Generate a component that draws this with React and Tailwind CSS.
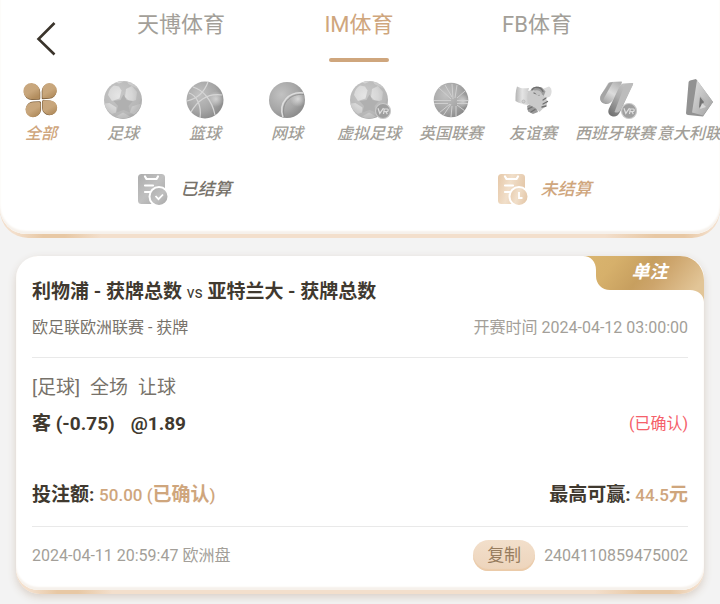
import React, { useState } from "react";

const TABS = ["天博体育", "IM体育", "FB体育"];

const CATEGORIES = [
  { name: "全部", Icon: CloverIcon },
  { name: "足球", Icon: SoccerIcon },
  { name: "篮球", Icon: BasketballIcon },
  { name: "网球", Icon: TennisIcon },
  { name: "虚拟足球", Icon: VirtualSoccerIcon },
  { name: "英国联赛", Icon: EnglandIcon },
  { name: "友谊赛", Icon: HandshakeIcon },
  { name: "西班牙联赛", Icon: SpainIcon },
  { name: "意大利联赛", Icon: ItalyIcon },
];

// shared gradients for all icons
function Gradients() {
  return (
    <svg width="0" height="0" className="absolute" aria-hidden="true">
      <defs>
        <radialGradient id="ball" cx="0.35" cy="0.35" r="0.75">
          <stop offset="0" stopColor="#c2c2c2" />
          <stop offset="0.6" stopColor="#a6a6a6" />
          <stop offset="1" stopColor="#868686" />
        </radialGradient>
        <radialGradient id="softBall" cx="0.4" cy="0.35" r="0.7">
          <stop offset="0" stopColor="#c8c8c8" />
          <stop offset="0.8" stopColor="#b6b6b6" />
          <stop offset="1" stopColor="#a2a2a2" />
        </radialGradient>
        <radialGradient id="patch" gradientUnits="userSpaceOnUse" cx="20" cy="20" r="22">
          <stop offset="0" stopColor="#e6e6e6" />
          <stop offset="0.6" stopColor="#d6d6d6" />
          <stop offset="1" stopColor="#bdbdbd" />
        </radialGradient>
        <radialGradient id="shine">
          <stop offset="0" stopColor="#e4e4e4" />
          <stop offset="1" stopColor="#e4e4e4" stopOpacity="0" />
        </radialGradient>
        <linearGradient id="clover" x1="0" y1="0" x2="0.6" y2="1">
          <stop offset="0" stopColor="#c9a880" />
          <stop offset="0.6" stopColor="#c8a67b" />
          <stop offset="1" stopColor="#b18c5d" />
        </linearGradient>
        <linearGradient id="metal" x1="0" y1="0" x2="1" y2="1">
          <stop offset="0" stopColor="#e0e0e0" />
          <stop offset="1" stopColor="#a0a0a0" />
        </linearGradient>
        <linearGradient id="sleeve" x1="0" y1="0" x2="1" y2="0">
          <stop offset="0" stopColor="#b4b4b4" />
          <stop offset="0.5" stopColor="#e4e4e4" />
          <stop offset="1" stopColor="#cccccc" />
        </linearGradient>
        <linearGradient id="spainLeft" x1="0.8" y1="0" x2="0.2" y2="1">
          <stop offset="0" stopColor="#b2b2b2" />
          <stop offset="0.5" stopColor="#dcdcdc" />
          <stop offset="1" stopColor="#9f9f9f" />
        </linearGradient>
        <linearGradient id="spainRight" x1="0.8" y1="0" x2="0.2" y2="1">
          <stop offset="0" stopColor="#c6c6c6" />
          <stop offset="0.5" stopColor="#ababab" />
          <stop offset="1" stopColor="#737373" />
        </linearGradient>
        <linearGradient id="sheetGray" x1="0" y1="0" x2="1" y2="1">
          <stop offset="0" stopColor="#adadad" />
          <stop offset="0.5" stopColor="#c0c0c0" />
          <stop offset="1" stopColor="#a5a5a5" />
        </linearGradient>
        <linearGradient id="sheetGold" x1="0" y1="0" x2="1" y2="0.3">
          <stop offset="0" stopColor="#e6c8a8" />
          <stop offset="0.5" stopColor="#f1dfca" />
          <stop offset="1" stopColor="#e5c9ab" />
        </linearGradient>
        <linearGradient id="ribbon" x1="0" y1="0.2" x2="1" y2="0.5">
          <stop offset="0" stopColor="#d9b46e" />
          <stop offset="0.22" stopColor="#d6b06b" />
          <stop offset="0.5" stopColor="#c79f5f" />
          <stop offset="0.65" stopColor="#cda56c" />
          <stop offset="1" stopColor="#e2c597" />
        </linearGradient>
      </defs>
    </svg>
  );
}

function IconFrame({ children }) {
  return (
    <svg viewBox="0 0 48 48" className="size-12" aria-hidden="true">
      {children}
    </svg>
  );
}

function VrBadge() {
  return (
    <g>
      <circle cx="38" cy="35" r="7.500" fill="#9f9f9f" stroke="#c9c9c9" strokeWidth="1.200" />
      <path
        d="M33 32.200l1.800 5.200 3.700-5.200M38.500 38l.8-5h3.200c1 0 1 2.600-.4 2.600h-2.800M41 35.800l1.300 2.400"
        fill="none"
        stroke="#dedede"
        strokeWidth="1.200"
      />
    </g>
  );
}

function CloverIcon() {
  return (
    <IconFrame>
      <g fill="#7d5f3c">
        <path d="M14.500 7.800a8.500 8.500 0 0 1 8.800 8.500v6a1.500 1.500 0 0 1-1.500 1.500l-6.500.2a8 8 0 0 1-.8-16.200z" />
        <path d="M32 7.800a7 7 0 0 1 0 15l-6 .4a1.200 1.200 0 0 1-1.300-1.300V15A7.300 7.300 0 0 1 32 7.800z" />
        <path d="M22.600 25.200a1.500 1.500 0 0 1 1.500 1.500V34a7.700 7.700 0 1 1-7.700-8.500z" />
        <path d="M26.500 24l6.500.4a7.400 7.400 0 1 1-8 7.400v-6.300a1.500 1.500 0 0 1 1.500-1.500z" />
      </g>
      <g fill="url(#clover)">
        <path d="M14.500 7a8.500 8.500 0 0 1 8.300 8.500v6a1.500 1.500 0 0 1-1.500 1.500l-6.800.2a8.100 8.100 0 0 1 0-16.200z" />
        <path d="M32.400 7a7.400 7.400 0 0 1 0 14.900l-5.700.4a1.200 1.200 0 0 1-1.300-1.300v-6.700A7.200 7.200 0 0 1 32.400 7z" />
        <path d="M22 26.100a1.500 1.500 0 0 1 1.500 1.500V34a7.500 7.500 0 1 1-7.500-7.700z" />
        <path d="M27 24.200l6 .2a7.300 7.300 0 1 1-7.400 7.300v-6a1.400 1.400 0 0 1 1.400-1.500z" />
      </g>
    </IconFrame>
  );
}

function SoccerPatches() {
  return (
    <g>
      <circle cx="24" cy="24" r="19" fill="url(#softBall)" />
      <g fill="url(#patch)">
        <path d="M9 19c1-5 3-8 6-9.500l5 1 2.500 4-2 8-7.500 2.500z" />
        <path d="M27 13l6-3 5 6-1 8-6 2-5-5z" />
        <path d="M5.500 27.500l5-.5 7 4.500-.5 5-4 1.500c-4-2.500-6.800-6-7.500-10.500z" />
        <path d="M33 30.500l9-3c-1 5-3.500 8.500-7 11l-4-2z" />
        <path d="M17 40.500l7-4 7 4c-4 2.500-10 2.500-14 0z" />
        <path d="M28 5.500c5 1 9 3.500 11.500 7.500l-4-2-6-3z" />
        <path d="M17 6.500c3-1.500 6-1.500 8-1l-5 2z" />
      </g>
      <path d="M24.500 18.500l3 5.500 6.500 1-4.500 5 1.500 6.500-6.500-2.500-7 2.500 1.500-6.500-4.500-5 7-1z" fill="#b0b0b0" />
    </g>
  );
}

function SoccerIcon() {
  return (
    <IconFrame>
      <SoccerPatches />
    </IconFrame>
  );
}

function BasketballIcon() {
  return (
    <IconFrame>
      <circle cx="24" cy="24" r="18.500" fill="url(#ball)" />
      <circle cx="35" cy="23" r="8" fill="url(#shine)" opacity=".7" />
      <g fill="none" stroke="#d6d6d6" strokeWidth="1.200">
        <path d="M6 25c9-2 17-8 21-19" />
        <path d="M12 11c10 3 19 13 22 28" />
        <path d="M8 17c7 2 13 12 11 25" />
        <path d="M10 36c7-12 17-19 31-17" />
      </g>
    </IconFrame>
  );
}

function TennisIcon() {
  return (
    <IconFrame>
      <circle cx="24" cy="24" r="18" fill="url(#ball)" />
      <circle cx="35" cy="23" r="8" fill="url(#shine)" opacity=".8" />
      <path d="M20 41c-5-14 6-26 20.500-24" fill="none" stroke="#dedede" strokeWidth="1.600" />
      <path d="M21.500 41c-4-13 5-24 19.500-22.500" fill="none" stroke="#8a8a8a" strokeWidth=".8" />
    </IconFrame>
  );
}

function VirtualSoccerIcon() {
  return (
    <IconFrame>
      <SoccerPatches />
      <VrBadge />
    </IconFrame>
  );
}

function EnglandIcon() {
  return (
    <IconFrame>
      <circle cx="24" cy="24" r="17.300" fill="url(#ball)" />
      <circle cx="36" cy="25" r="7" fill="url(#shine)" opacity=".7" />
      <g fill="none" stroke="#cfcfcf" strokeWidth="1">
        <path d="M7 24.500h17M7 27.500h14M30 24.500h11M30 27.500h11" />
        <path d="M25 8l1 15M30 9l-2 13M24 41l1-11M29 40v-10" />
        <path d="M12 12l12 11M38 15l-8 7M12 37l11-9M38 35l-8-6M18 9l7 12M16 40l8-12" />
      </g>
    </IconFrame>
  );
}

function HandshakeIcon() {
  return (
    <IconFrame>
      <path d="M31 14l9-3.500c3 2 3.500 6 1 10l-7 3z" fill="#dcdcdc" />
      <path d="M20 17l3-5 5-1.500 5 1 3.500 4-2 5-10 2z" fill="#9c9c9c" />
      <path d="M18 30l5-3 4 3 2 6-5 2-5-2.500z" fill="#9a9a9a" />
      <path d="M19 15l5-1 6 2 5 4 3.500 5-1 5-4 3-3 3-4-4-8-4-3-4z" fill="#cacaca" />
      <path d="M8 10.500c4 2 7 2 12 1.500-2 6-2 11-1 17-5-.5-9-2-12.500-4 0-5 0-10 1.500-14.500z" fill="url(#sleeve)" />
      <circle cx="14.500" cy="25.500" r="1.500" fill="#d2d2d2" stroke="#aaa" strokeWidth=".6" />
      <g fill="none" stroke="#6f6f6f" strokeWidth="1.300" strokeLinecap="round">
        <path d="M23 14c1-2 3-3 5-2.500M29 11.500c3 0 4 2 5 4M25 17l5 2" />
        <path d="M34 24l3-2M34 28l4.500-2.500M33 31l4-1M19 33l4-2M22 36l4-2.500" />
      </g>
      <path d="M25 15c3-2 7 0 8 3l-5 1.500z" fill="#c3c3c3" />
    </IconFrame>
  );
}

function SpainIcon() {
  return (
    <IconFrame>
      <path d="M20 6l10-.5c1 0 1.200.7.800 1.500L22 24c-2 3-5 5-9 3.500C9 26 8.500 22 10 19l6-10c1-2 2-3 4-3z" fill="url(#spainLeft)" />
      <path d="M18 7l4-1-9 16c-1 2-1 4 0 5.500-4-1.500-4.500-5.500-3-8.500z" fill="#a4a4a4" />
      <path d="M32 7.500l9-.5c1 0 1.500.5 1 1.500L29 36c-2 4-5 5.500-8.500 4-3-1.500-4-4-2.500-7.500l9-19c1.500-3.500 2.500-5.500 5-6z" fill="url(#spainRight)" />
      <path d="M34 8l7-1c1 0 1.500.5 1 1.500L29.500 34c-2 3-4 3-6 2z" fill="#bcbcbc" />
      <VrBadge />
    </IconFrame>
  );
}

function ItalyIcon() {
  return (
    <IconFrame>
      <path d="M17 4.500l6-1.500L40 26 30 40.500 15 39c-1 0-2-1-2-2L15.500 7c0-1.500.5-2 1.500-2.500z" fill="#929292" />
      <path d="M24 4l16 22-10 13.500-11-3z" fill="url(#metal)" />
      <path d="M27 20l9 7-6 8-4-2z" fill="#b6b6b6" />
      <path d="M27 21l4 5-2 3-3 3z" fill="#737373" />
      <path d="M27 33l2-6 4 4z" fill="#d9d9d9" />
    </IconFrame>
  );
}

function SheetIcon({ gold }) {
  const fill = gold ? "url(#sheetGold)" : "url(#sheetGray)";
  return (
    <svg viewBox="0 0 32 32" className="size-8" aria-hidden="true">
      <rect x="1" y="1" width="27" height="30" rx="3.500" fill={fill} />
      <path
        d="M8 3.500l1.500 2.500h10L21 3.500M8 12.500h8M8 19h5"
        fill="none"
        stroke="#fff"
        strokeWidth="2.200"
        strokeLinecap="round"
        strokeLinejoin="round"
      />
      <circle cx="22" cy="23.500" r="9.500" fill={fill} stroke="#fff" strokeWidth="2" />
      {gold ? (
        <path d="M22 19v6h3.500" fill="none" stroke="#fff" strokeWidth="1.800" />
      ) : (
        <path d="M18.500 23l3 3.200 4.500-4.700" fill="none" stroke="#fff" strokeWidth="1.800" />
      )}
    </svg>
  );
}

// thin gold strip that shows below a rounded white panel
const GOLD_EDGE =
  "bg-[linear-gradient(90deg,#f3dfcc_2%,#e8c8a4_6%,#e8c8a4_9%,#f3dfcc_14%,#f3dfcc_84%,#e8c8a4_91%,#e8c8a4_95%,#f3dfcc_99%)]";

function Header() {
  const [tab, setTab] = useState("IM体育");
  const [category, setCategory] = useState("全部");
  const [settled, setSettled] = useState(false);

  return (
    <header className={`rounded-b-[28px] pb-1 ${GOLD_EDGE}`}>
      <div className="overflow-hidden rounded-b-[26px] bg-white pb-7 shadow-[inset_0_-3px_2px_#f6f1eb]">
        <nav className="flex h-[62px] pr-[94px]">
          <button className="flex w-[92px] shrink-0 items-center pt-4 pl-9" aria-label="返回">
            <svg viewBox="0 0 20 34" className="h-[34px] w-5" fill="none" aria-hidden="true">
              <path d="M18.500 1L2.500 17l16 15.500" stroke="#3a342b" strokeWidth="2.600" />
            </svg>
          </button>
          {TABS.map((name) => (
            <button
              key={name}
              onClick={() => setTab(name)}
              className={`flex flex-1 flex-col items-center justify-between pt-[9px] text-[22px] leading-8 ${
                tab === name ? "text-[#cfa67d]" : "text-[#a39f99]"
              }`}
            >
              {name}
              {tab === name && <span className="h-1 w-[60px] rounded-full bg-[#cfa67d]" />}
            </button>
          ))}
        </nav>

        <div className="mt-[14px] flex overflow-x-auto [scrollbar-width:none]">
          {CATEGORIES.map(({ name, Icon }) => (
            <button
              key={name}
              onClick={() => setCategory(name)}
              className={`flex w-[82px] shrink-0 flex-col items-center text-base leading-5 font-medium whitespace-nowrap italic ${
                category === name ? "text-[#cfa67d]" : "text-[#a39f99]"
              }`}
            >
              <Icon />
              {name}
            </button>
          ))}
        </div>

        <div className="mt-7 flex">
          <button
            onClick={() => setSettled(true)}
            className="flex flex-1 items-center justify-center gap-3 pl-2 text-[17px] leading-[34px] font-medium text-[#77726a] italic"
          >
            <SheetIcon />
            已结算
          </button>
          <button
            onClick={() => setSettled(false)}
            className="flex flex-1 items-center justify-center gap-3 pl-2 text-[17px] leading-[34px] font-medium text-[#cfa67d] italic"
          >
            <SheetIcon gold />
            未结算
          </button>
        </div>
      </div>
    </header>
  );
}

function BetCard() {
  return (
    <article className={`relative mx-4 mt-[18px] rounded-[24px] pb-1 shadow-[0_3px_8px_#d9cfc6] ${GOLD_EDGE}`}>
      <div className="rounded-[22px] bg-white px-4 pt-5 pb-[19px] shadow-[inset_0_-3px_2px_#f6f1eb]">
        <h2 className="text-[19px] leading-8 font-bold text-[#40392f]">
          利物浦 - 获牌总数 <span className="text-base font-normal">vs</span> 亚特兰大 - 获牌总数
        </h2>
        <div className="mt-[6px] flex justify-between border-b border-[#e9e9e9] pb-[15px] text-base leading-7">
          <span className="text-[#77726a]">欧足联欧洲联赛 - 获牌</span>
          <span className="text-[#a39f99]">开赛时间 2024-04-12 03:00:00</span>
        </div>

        <div className="mt-[14px] flex gap-[10px] text-[19px] leading-8 text-[#77726a]">
          <span>[足球]</span>
          <span>全场</span>
          <span>让球</span>
        </div>
        <div className="mt-1 flex items-center justify-between leading-8">
          <span className="flex gap-4 text-[19px] font-bold text-[#40392f]">
            <span>客 (-0.75)</span>
            <span>@1.89</span>
          </span>
          <span className="text-base text-[#f5606a]">(已确认)</span>
        </div>

        <div className="mt-[39px] flex justify-between border-b border-[#e9e9e9] pb-[15px] text-[19px] leading-8 font-bold text-[#40392f]">
          <span>
            投注额:{" "}
            <span className="text-[#cfa67d]">
              <span className="text-[17px] font-medium">50.00 (</span>已确认
              <span className="text-[17px] font-medium">)</span>
            </span>
          </span>
          <span>
            最高可赢:{" "}
            <span className="text-[#cfa67d]">
              <span className="text-[17px] font-medium">44.5</span>元
            </span>
          </span>
        </div>

        <footer className="mt-[13px] flex items-center justify-between text-base text-[#a39f99]">
          <span>2024-04-11 20:59:47 欧洲盘</span>
          <span className="flex items-center gap-[9px]">
            <button className="rounded-full bg-linear-to-b from-[#f2dfcb] to-[#edd4bb] px-[14px] text-[17px] leading-[31px] text-[#977c5e] shadow-[inset_0_-2px_1px_#ebcba9]">
              复制
            </button>
            2404110859475002
          </span>
        </footer>
      </div>

      <div className="absolute top-0 right-0 h-[46px] w-[121px]">
        <svg viewBox="0 0 121 46" className="size-full" aria-hidden="true">
          <path
            d="M0 0H97C111 0 121 11 121 24V46C121 39 115 34 107 34H27C19 34 13 28 13 20V14C13 6 8 0 0 0z"
            fill="url(#ribbon)"
          />
        </svg>
        <span className="absolute inset-x-0 top-0 pl-3 text-center text-lg leading-8 font-bold text-white italic">
          单注
        </span>
      </div>
    </article>
  );
}

function App() {
  return (
    <main className="min-h-screen overflow-hidden bg-[#f3f3f3] pb-[10px] font-[Roboto,'Noto_Sans_CJK_SC',sans-serif]">
      <Gradients />
      <Header />
      <BetCard />
    </main>
  );
}

export default App;
